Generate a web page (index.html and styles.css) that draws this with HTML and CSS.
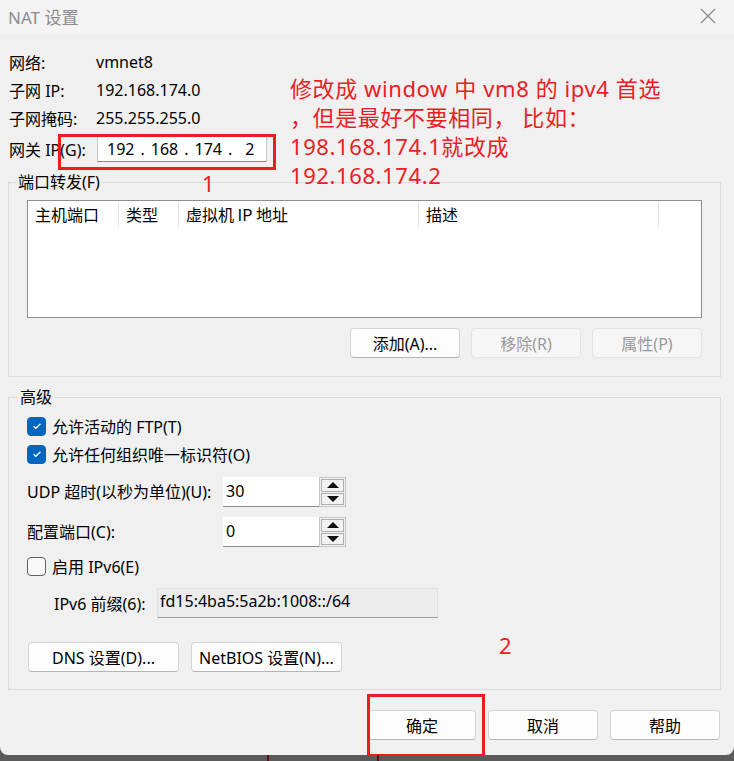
FILE: index.html
```html
<!DOCTYPE html>
<html lang="zh-CN">
<head>
<meta charset="utf-8">
<title>NAT 设置</title>
<link rel="stylesheet" href="styles.css">
</head>
<body>
<div class="dialog">
  <div class="titlebar">
    <span class="title">NAT 设置</span>
    <svg class="close" width="16" height="16" viewBox="0 0 16 16"><path d="M1 1L15 15M15 1L1 15" stroke="#8a8a8a" stroke-width="1.3" fill="none"/></svg>
  </div>

  <div class="content">
    <div class="info">
      <div class="info-row"><span class="info-label">网络:</span><span>vmnet8</span></div>
      <div class="info-row"><span class="info-label">子网 IP:</span><span>192.168.174.0</span></div>
      <div class="info-row"><span class="info-label">子网掩码:</span><span>255.255.255.0</span></div>
      <div class="gw-row">
        <span class="gw-label">网关 IP(G):</span>
        <div class="ip-box"><span>192</span><span>.</span><span>168</span><span>.</span><span>174</span><span>.</span><span class="ip-last">2</span></div>
      </div>
    </div>

    <div class="group group-ports">
      <div class="group-title">端口转发(F)</div>
      <div class="listview">
        <div class="lv-header">
          <div class="lv-col c1">主机端口</div>
          <div class="lv-col c2">类型</div>
          <div class="lv-col c3">虚拟机 IP 地址</div>
          <div class="lv-col c4">描述</div>
          <div class="lv-col c5"></div>
        </div>
      </div>
      <div class="btn-row right">
        <button class="btn w110">添加(A)...</button>
        <button class="btn w110 disabled">移除(R)</button>
        <button class="btn w110 disabled">属性(P)</button>
      </div>
    </div>

    <div class="group group-adv">
      <div class="group-title">高级</div>
      <div class="check-row"><span class="checkbox checked"><svg width="10" height="8" viewBox="0 0 10 8"><path d="M1.5 4.2L3.8 6.3L8.5 1.7" stroke="#fff" stroke-width="1.2" fill="none"/></svg></span><span>允许活动的 FTP(T)</span></div>
      <div class="check-row"><span class="checkbox checked"><svg width="10" height="8" viewBox="0 0 10 8"><path d="M1.5 4.2L3.8 6.3L8.5 1.7" stroke="#fff" stroke-width="1.2" fill="none"/></svg></span><span>允许任何组织唯一标识符(O)</span></div>
      <div class="spin-row first">
        <span class="spin-label">UDP 超时(以秒为单位)(U):</span>
        <div class="spin-field">30</div>
        <div class="spin-btns">
          <div class="spin-btn"><svg width="12" height="6" viewBox="0 0 12 6"><path d="M6 0L12 6H0Z" fill="#111"/></svg></div>
          <div class="spin-btn"><svg width="12" height="6" viewBox="0 0 12 6"><path d="M0 0H12L6 6Z" fill="#111"/></svg></div>
        </div>
      </div>
      <div class="spin-row">
        <span class="spin-label">配置端口(C):</span>
        <div class="spin-field">0</div>
        <div class="spin-btns">
          <div class="spin-btn"><svg width="12" height="6" viewBox="0 0 12 6"><path d="M6 0L12 6H0Z" fill="#111"/></svg></div>
          <div class="spin-btn"><svg width="12" height="6" viewBox="0 0 12 6"><path d="M0 0H12L6 6Z" fill="#111"/></svg></div>
        </div>
      </div>
      <div class="check-row ipv6"><span class="checkbox"></span><span>启用 IPv6(E)</span></div>
      <div class="prefix-row">
        <span class="prefix-label">IPv6 前缀(6):</span>
        <div class="prefix-field">fd15:4ba5:5a2b:1008::/64</div>
      </div>
      <div class="btn-row left">
        <button class="btn w151">DNS 设置(D)...</button>
        <button class="btn w151">NetBIOS 设置(N)...</button>
      </div>
    </div>

    <div class="btn-row right footer">
      <button class="btn w108">确定</button>
      <button class="btn w110">取消</button>
      <button class="btn w110">帮助</button>
    </div>
  </div>

  <div class="note note-text">修改成 window 中 vm8 的 ipv4 首选<br>，但是最好不要相同， 比如：<br>198.168.174.1就改成<br>192.168.174.2</div>
  <div class="note note-1">1</div>
  <div class="note note-2">2</div>
  <div class="mark mark-gw"></div>
  <div class="mark mark-ok"></div>
</div>
<div class="desk">
  <span class="desk-line l1"></span>
  <span class="desk-line l2"></span>
</div>
</body>
</html>
```

FILE: styles.css
```css
* { box-sizing: border-box; }

html, body {
  margin: 0;
  padding: 0;
}

body {
  background: #5a5a5a;
  width: 734px;
  height: 761px;
  overflow: hidden;
  font-family: "Noto Sans", "Noto Sans CJK SC", sans-serif;
  font-size: 16px;
  color: #000;
}

.dialog {
  position: relative;
  width: 734px;
  height: 755px;
  background: #f0f0f0;
  border-radius: 0 0 8px 8px;
  overflow: hidden;
}

.desk {
  height: 6px;
  display: flex;
  padding-left: 267px;
  gap: 108px;
}

.desk-line {
  width: 2px;
  height: 6px;
  background: #5a1010;
}

.titlebar {
  height: 34px;
  background: #f3f3f3;
  display: flex;
  align-items: center;
  justify-content: space-between;
  padding: 0 18px 2px 8px;
}

.title {
  font-size: 17px;
  color: #8c8c8c;
}

.close { display: block; }

.content {
  padding: 14px 13px 0 8px;
}

/* info rows */
.info-row {
  height: 28px;
  display: flex;
  align-items: center;
  padding-left: 1px;
}

.info-label {
  width: 87px;
}

.gw-row {
  margin-top: 3px;
  height: 28px;
  display: flex;
  align-items: center;
  padding-left: 1px;
}

.gw-label {
  width: 88px;
}

.ip-box {
  width: 170px;
  height: 26px;
  background: #fff;
  border: 1px solid #c8c8c8;
  border-bottom-color: #8a8a8a;
  display: flex;
  align-items: center;
  padding-left: 9px;
  gap: 6px;
}

.ip-last { margin-left: 7px; }

/* group boxes */
.group {
  border: 1px solid #dcdcdc;
  padding: 0 18px 17px 18px;
}

.group-title {
  width: fit-content;
  height: 20px;
  line-height: 20px;
  margin: -11px 0 0 -11px;
  padding: 0 2px;
  background: #f0f0f0;
}

.group-ports {
  margin-top: 19px;
  padding-bottom: 18px;
}

.group-adv {
  margin-top: 20px;
}

.group-adv .group-title {
  margin-left: -9px;
}

/* listview */
.listview {
  margin-top: 8px;
  height: 118px;
  background: #fff;
  border: 1px solid #8e8f94;
}

.lv-header {
  display: flex;
  height: 26px;
  padding-top: 1px;
}

.lv-col {
  height: 25px;
  line-height: 25px;
  padding-left: 7px;
  border-right: 1px solid #e5e5e5;
  font-family: "Noto Sans CJK SC", sans-serif;
}

.c1 { width: 91px; }
.c2 { width: 60px; }
.c3 { width: 240px; }
.c4 { width: 240px; }
.c5 { width: 1px; border-right: none; }

/* buttons */
.btn-row {
  display: flex;
  gap: 11px;
  margin-top: 10px;
}

.btn-row.right { justify-content: flex-end; }

.btn {
  height: 30px;
  font-family: "Noto Sans", "Noto Sans CJK SC", sans-serif;
  font-size: 16px;
  color: #000;
  background: #fdfdfd;
  border: 1px solid #d4d4d4;
  border-bottom-color: #b5b5b5;
  border-radius: 4px;
  padding: 0;
}

.btn.disabled {
  background: #f6f6f6;
  border-color: #e4e4e4;
  color: #9a9a9a;
}

.w108 { width: 108px; }
.w110 { width: 110px; }
.w151 { width: 151px; }

.btn-row.left {
  margin-top: 24px;
  gap: 12px;
  padding-left: 1px;
}

.footer {
  margin-top: 20px;
  gap: 12px;
  padding-right: 1px;
}

/* checkboxes */
.check-row {
  height: 28px;
  display: flex;
  align-items: center;
  gap: 6px;
}

.check-row:nth-of-type(2) { margin-top: 5px; }

.checkbox {
  width: 19px;
  height: 19px;
  border-radius: 4px;
  border: 1px solid #5f5f5f;
  background: #f8f8f8;
  display: flex;
  align-items: center;
  justify-content: center;
}

.checkbox.checked {
  background: #0067c0;
  border-color: #0067c0;
}

.check-row.ipv6 { margin-top: 5px; }

/* spin rows */
.spin-row {
  margin-top: 10px;
  height: 30px;
  display: flex;
}

.spin-row.first { margin-top: 9px; }

.spin-label {
  width: 196px;
  line-height: 30px;
}

.spin-field {
  width: 96px;
  height: 30px;
  background: #fff;
  border-bottom: 1px solid #8a8a8a;
  padding: 1px 0 0 3px;
  line-height: 26px;
}

.spin-btns {
  width: 27px;
  height: 30px;
  border: 1px solid #c4c4c4;
  background: #f0f0f0;
  padding: 1px;
  display: flex;
  flex-direction: column;
  gap: 1px;
}

.spin-btn {
  flex: 1;
  border: 1px solid #b0b0b0;
  background: #f2f2f2;
  display: flex;
  align-items: center;
  justify-content: center;
}

.spin-btn svg { width: 12px; height: 6px; }

/* ipv6 prefix */
.prefix-row {
  margin-top: 8px;
  height: 30px;
  display: flex;
  align-items: center;
  padding-left: 27px;
}

.prefix-label {
  width: 103px;
}

.prefix-field {
  width: 281px;
  height: 30px;
  background: #ececec;
  border: 1px solid #e2e2e2;
  border-bottom-color: #9a9a9a;
  padding-left: 2px;
  line-height: 24px;
}

/* annotations (overlay) */
.note {
  position: absolute;
  color: #ec1c24;
  font-family: "Noto Sans", "Noto Sans CJK SC", sans-serif;
  font-size: 22px;
  line-height: 29px;
}

.note-text {
  left: 290px;
  top: 74px;
  letter-spacing: 0.6px;
}

.note-1 {
  left: 202px;
  top: 169px;
}

.note-2 {
  left: 499px;
  top: 631px;
}

.mark {
  position: absolute;
  border: 3px solid #ec1c24;
}

.mark-gw {
  left: 58px;
  top: 134px;
  width: 218px;
  height: 36px;
}

.mark-ok {
  left: 367px;
  top: 694px;
  width: 118px;
  height: 63px;
}
```
